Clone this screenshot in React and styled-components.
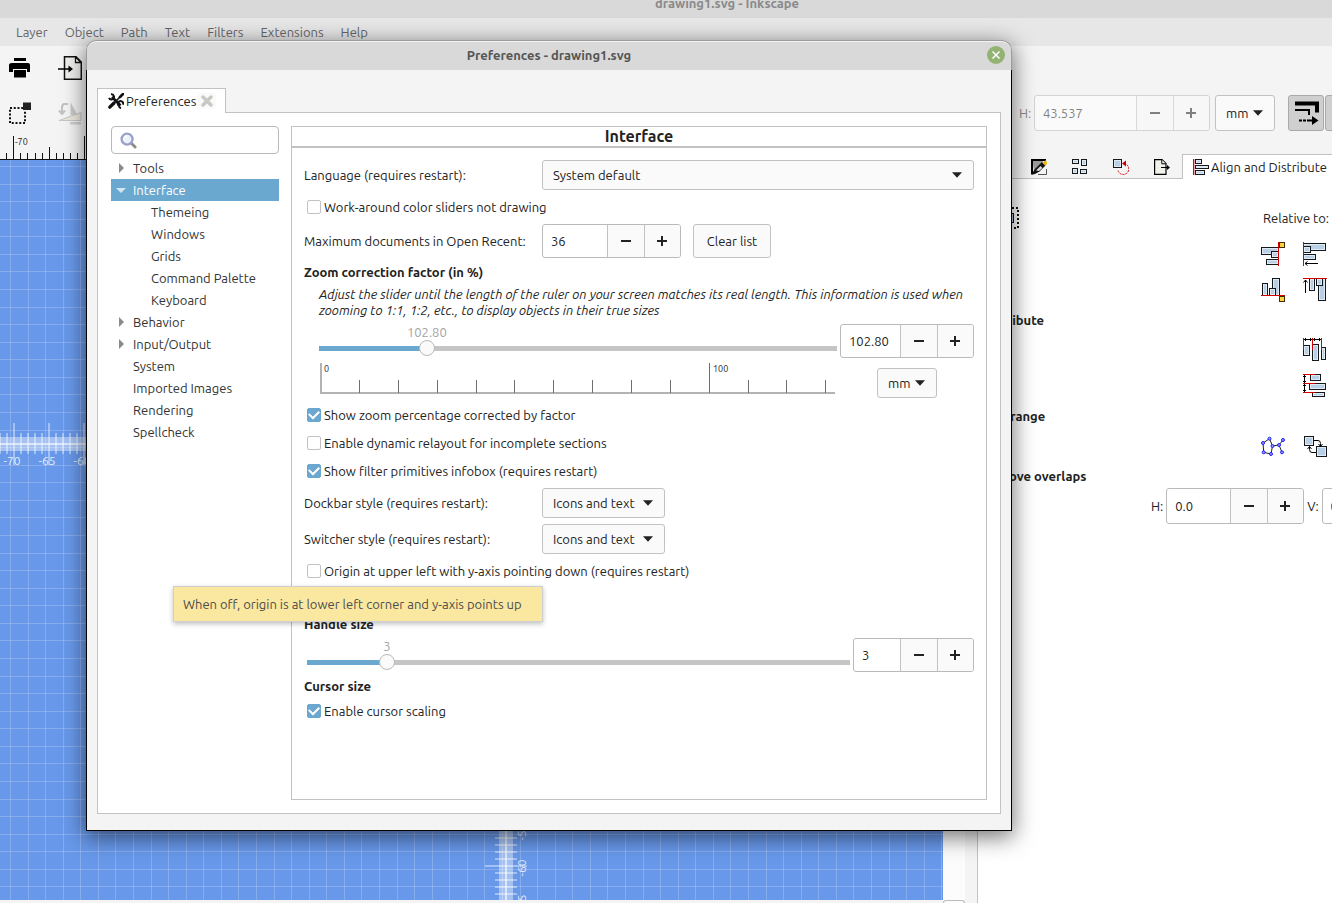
import { useState } from 'react';
import styled, { createGlobalStyle, css } from 'styled-components';

const GlobalStyle = createGlobalStyle`
  * {
    box-sizing: border-box;
  }

  body {
    margin: 0;
    overflow: hidden;
    background: #f4f4f4;
    color: #222222;
    font-family: Ubuntu, 'Noto Sans', 'Open Sans', sans-serif;
    font-size: 13px;
    line-height: 16px;
  }

  button,
  input,
  select {
    margin: 0;
    color: inherit;
    font: inherit;
  }

  svg {
    display: block;
    flex: none;
  }
`;

const Desktop = styled.div`
  position: relative;
  display: flex;
  flex-direction: column;
  height: 100vh;
  overflow: hidden;
  white-space: nowrap;
`;

const AppTitle = styled.header`
  display: flex;
  align-items: flex-end;
  justify-content: center;
  flex: none;
  height: 18px;
  padding: 0 0 7px 122px;
  background: #d9d9d9;
  color: #8a8a8a;
  font-weight: 600;
`;

const MenuBar = styled.nav`
  display: flex;
  align-items: center;
  flex: none;
  gap: 17px;
  height: 28px;
  padding-left: 16px;
  background: #e7e7e7;
  color: #66666a;
`;

const MenuItem = styled.button`
  padding: 0;
  border: none;
  background: none;
`;

const Toolbar = styled.div`
  display: flex;
  align-items: center;
  flex: none;
  height: 45px;
  padding: 0 0 2px 8px;
`;

const ToolButton = styled.button`
  padding: 0;
  margin-right: 26px;
  border: none;
  background: none;
`;

const SizeControls = styled.div`
  display: flex;
  align-items: center;
  flex: none;
  width: 313px;
  margin-left: auto;
`;

const ToggleButton = styled.button`
  flex: none;
  width: 36px;
  height: 36px;
  padding: 0 0 0 5px;
  margin-right: 1px;
  border: 1px solid #a9a9a9;
  border-radius: 3px;
  background: #cfcfcf;
`;

const Workspace = styled.main`
  display: flex;
  flex: 1;
  min-height: 0;
`;

const CanvasColumn = styled.div`
  display: flex;
  flex: 1;
  flex-direction: column;
  min-width: 0;
  padding-bottom: 3px;
`;

const RulerStrip = styled.svg`
  width: 100%;
  height: 24px;
`;

const Canvas = styled.svg`
  flex: 1;
  width: 100%;
  min-height: 0;
  background: #6898ea;
`;

const ScrollColumn = styled.div`
  display: flex;
  flex-direction: column;
  justify-content: flex-end;
  flex: none;
  width: 22px;
  margin-top: 24px;
  background: #fcfcfc;
`;

const CornerButton = styled.button`
  height: 3px;
  padding: 0;
  border: 1px solid #bcbcbc;
  border-bottom: none;
  border-radius: 3px 3px 0 0;
  background: #fcfcfc;
`;

const Dock = styled.aside`
  display: flex;
  flex-direction: column;
  flex: none;
  width: 355px;
  margin-left: 12px;
  padding-top: 18px;
  overflow: hidden;
`;

const DockTabs = styled.div`
  display: flex;
  flex: none;
  height: 25px;
  padding-left: 41px;
  box-shadow: inset 0 -1px 0 #c2c2c2;
`;

const DockTab = styled.button`
  display: flex;
  align-items: center;
  flex: none;
  justify-content: center;
  width: 41px;
  padding: 0;
  border: none;
  background: none;

  ${({ $active }) =>
    $active &&
    css`
      justify-content: flex-start;
      gap: 2px;
      width: 190px;
      padding-left: 10px;
      border: 1px solid #c2c2c2;
      border-bottom: none;
      background: #ffffff;
    `}
`;

const DockPage = styled.div`
  flex: 1;
  padding: 27px 0 0 4px;
  border-left: 1px solid #c2c2c2;
  background: #ffffff;
`;

const RelativeRow = styled.div`
  display: flex;
  align-items: center;
  height: 24px;
  margin-bottom: 6px;
  padding-left: 13px;
  gap: 244px;
`;

const DockHeading = styled.h2`
  height: 24px;
  margin: 0;
  padding-top: 4px;
  font-size: 13px;
  font-weight: 700;
`;

const DockRow = styled.div`
  display: flex;
  align-items: center;
  height: 36px;
  padding-left: ${({ $indent }) => $indent}px;
  gap: 18px;
`;

const PlainButton = styled.button`
  flex: none;
  padding: 0;
  border: none;
  background: none;
`;

const OverlapRow = styled(DockRow)`
  gap: 3px;
`;

const Dialog = styled.section`
  position: absolute;
  top: 40px;
  right: 320px;
  left: 86px;
  border-radius: 10px 10px 0 0;
  box-shadow: 0 5px 22px 1px rgba(0, 0, 0, 0.55);
`;

const DialogTitle = styled.header`
  display: flex;
  align-items: center;
  height: 30px;
  padding: 0 6px 2px 24px;
  border: 1px solid #9c9c9c;
  border-bottom: none;
  border-radius: 10px 10px 0 0;
  background: #d9d9d9;
  box-shadow: inset 0 1px 0 #f4f4f4;
`;

const DialogName = styled.h1`
  flex: 1;
  margin: 0;
  color: #555555;
  font-size: 13px;
  font-weight: 600;
  text-align: center;
`;

const CloseButton = styled.button`
  width: 18px;
  height: 18px;
  padding: 0;
  border: none;
  border-radius: 50%;
  background: #92b372;
`;

const DialogBody = styled.div`
  padding: 18px 10px 16px;
  border: 1px solid #000000;
  border-top: none;
  background: #f4f4f4;
`;

const NotebookTab = styled.div`
  position: relative;
  display: flex;
  align-items: center;
  width: 129px;
  height: 25px;
  margin-bottom: -1px;
  padding-left: 10px;
  gap: 2px;
  border: 1px solid #c2c2c2;
  border-bottom: none;
  background: #ffffff;
`;

const TabClose = styled.button`
  padding: 2px;
  border: none;
  border-radius: 3px;
  background: #fafafa;
`;

const NotebookPage = styled.div`
  display: flex;
  gap: 12px;
  padding: 13px;
  border: 1px solid #c2c2c2;
  background: #ffffff;
`;

const Sidebar = styled.div`
  flex: none;
  width: 168px;
`;

const SearchBox = styled.label`
  display: flex;
  align-items: center;
  height: 28px;
  margin-bottom: 3px;
  padding-left: 8px;
  gap: 6px;
  border: 1px solid #b9b9b9;
  border-radius: 4px;
`;

const SearchInput = styled.input`
  flex: 1;
  width: 100%;
  min-width: 0;
  border: none;
  outline: none;
  background: none;
`;

const TreeRow = styled.button`
  display: flex;
  align-items: center;
  width: 100%;
  height: 22px;
  padding: 0 0 0 ${({ $depth }) => 7 + $depth * 18}px;
  gap: 9px;
  border: none;
  background: ${({ $selected }) => ($selected ? '#6ba8cf' : 'none')};
  color: ${({ $selected }) => ($selected ? '#ffffff' : '#333333')};
`;

const Expander = styled.svg`
  width: 6px;
  height: 10px;
  overflow: visible;
  fill: ${({ $open }) => ($open ? '#d3e5f1' : '#8a8a8a')};
`;

const Panel = styled.div`
  flex: 1;
  min-width: 0;
  min-height: 674px;
  border: 1px solid #c2c2c2;
`;

const PanelTitle = styled.h2`
  height: 21px;
  margin: 0;
  border-bottom: 2px solid #c2c2c2;
  font-size: 16px;
  font-weight: 700;
  line-height: 18px;
  text-align: center;
`;

const Form = styled.form`
  display: flex;
  flex-direction: column;
  gap: 6px;
  padding: 12px;
`;

const Row = styled.div`
  display: flex;
  align-items: center;
  gap: ${({ $gap }) => $gap || 0}px;
  padding-left: ${({ $indent }) => $indent || 0}px;
`;

const RulerRow = styled(Row)`
  align-items: flex-end;
  justify-content: space-between;
  height: 34px;
  padding-right: 37px;
`;

const Label = styled.label`
  flex: none;
  width: 238px;
`;

const Heading = styled.h3`
  margin: 0;
  font-size: 13px;
  font-weight: 700;
`;

const HandleHeading = styled(Heading)`
  margin-top: 28px;
`;

const Hint = styled.p`
  margin: 0;
  padding-left: 15px;
  font-style: italic;
  white-space: normal;
`;

const CheckLabel = styled.label`
  display: flex;
  align-items: center;
  height: 22px;
  padding-left: 3px;
  gap: 3px;
`;

const CheckInput = styled.input`
  display: grid;
  place-items: center;
  width: 14px;
  height: 14px;
  border: 1px solid #c2c2c2;
  border-radius: 2px;
  background: #ffffff;
  appearance: none;

  &:checked {
    border-color: #6ba8cf;
    background: #6ba8cf;
  }

  &:checked::after {
    width: 8px;
    height: 5px;
    margin-bottom: 3px;
    border: solid #ffffff;
    border-width: 0 0 2px 2px;
    transform: rotate(-45deg);
    content: '';
  }
`;

const SelectWrap = styled.span`
  display: grid;
  grid-template-columns: 1fr 22px;
  align-items: center;
  flex: ${({ $width }) => ($width ? 'none' : 1)};
  width: ${({ $width }) => ($width ? `${$width}px` : 'auto')};

  svg {
    grid-area: 1 / 2;
    pointer-events: none;
  }
`;

const SelectBox = styled.select`
  grid-area: 1 / 1 / 2 / 3;
  width: 100%;
  height: ${({ $height }) => $height || 30}px;
  padding: 0 10px;
  border: 1px solid #c2c2c2;
  border-radius: 3px;
  background: #fafafa;
  appearance: none;
`;

const SpinBox = styled.div`
  display: flex;
  flex: none;
  height: ${({ $height }) => $height || 34}px;
  border: 1px solid #bababa;
  border-radius: 3px;
  background: #ffffff;
  overflow: hidden;
  opacity: ${({ $disabled }) => ($disabled ? 0.55 : 1)};
`;

const SpinInput = styled.input`
  width: ${({ $width }) => $width}px;
  padding: 0 0 0 8px;
  border: none;
  outline: none;
  background: none;
`;

const SpinButton = styled.button`
  display: grid;
  place-items: center;
  width: ${({ $last }) => ($last ? 36 : 37)}px;
  padding: 0 ${({ $last }) => ($last ? 2 : 0)}px 0 0;
  border: none;
  border-left: 1px solid #c2c2c2;
  background: #fafafa;
`;

const PushButton = styled.button`
  width: 78px;
  height: 34px;
  padding: 0;
  margin-left: 12px;
  border: 1px solid #c2c2c2;
  border-radius: 3px;
  background: #fafafa;
`;

const SliderBox = styled.div`
  display: flex;
  flex: 1;
  flex-direction: column;
  height: 34px;
  margin-right: ${({ $gap }) => $gap}px;
`;

const SliderValue = styled.output`
  width: 60px;
  margin-left: calc(var(--pos) - 30px);
  color: #a3a3a3;
  text-align: center;
`;

const Slider = styled.input`
  width: 100%;
  height: 16px;
  background: linear-gradient(
      to right,
      #6ba8cf var(--pos),
      #c5c5c5 var(--pos)
    )
    center / 100% 5px no-repeat;
  appearance: none;

  &::-webkit-slider-thumb {
    width: 16px;
    height: 16px;
    border: 1px solid #b9b9b9;
    border-radius: 50%;
    background: #fafafa;
    appearance: none;
  }
`;

const SizeLabel = styled.label`
  flex: none;
  width: 15px;
  color: #8c8c8c;
`;

const Tooltip = styled.div`
  position: absolute;
  top: 546px;
  left: 87px;
  width: 370px;
  padding: 9px;
  border: 1px solid #cfcfcf;
  background: #fbe8a0;
  box-shadow: 0 2px 5px rgba(0, 0, 0, 0.25);
  color: #4c4c4c;
`;

const menus = ['Layer', 'Object', 'Path', 'Text', 'Filters', 'Extensions', 'Help'];

const tree = [
  { name: 'Tools', depth: 0, state: 'closed' },
  { name: 'Interface', depth: 0, state: 'open' },
  { name: 'Themeing', depth: 1 },
  { name: 'Windows', depth: 1 },
  { name: 'Grids', depth: 1 },
  { name: 'Command Palette', depth: 1 },
  { name: 'Keyboard', depth: 1 },
  { name: 'Behavior', depth: 0, state: 'closed' },
  { name: 'Input/Output', depth: 0, state: 'closed' },
  { name: 'System', depth: 0 },
  { name: 'Imported Images', depth: 0 },
  { name: 'Rendering', depth: 0 },
  { name: 'Spellcheck', depth: 0 },
];

const range = (count) => Array.from({ length: count }, (_, i) => i);

const Arrow = () => (
  <svg width="10" height="6" viewBox="0 0 10 6">
    <path d="M0 .3h10L5 5.7z" fill="#222" />
  </svg>
);

const Dropdown = ({ id, label, options, width, height }) => (
  <SelectWrap $width={width}>
    <SelectBox id={id} aria-label={label} $height={height}>
      {options.map((option) => (
        <option key={option}>{option}</option>
      ))}
    </SelectBox>
    <Arrow />
  </SelectWrap>
);

const Spin = ({ id, label, value, width, height, disabled }) => {
  const [text, setText] = useState(value);
  const step = (delta) => {
    const decimals = (text.split('.')[1] || '').length;
    setText((Number(text) + delta).toFixed(decimals));
  };

  return (
    <SpinBox $disabled={disabled} $height={height}>
      <SpinInput
        id={id}
        aria-label={label}
        value={text}
        disabled={disabled}
        $width={width}
        onChange={(e) => setText(e.target.value)}
      />
      <SpinButton
        type="button"
        aria-label="Decrease"
        disabled={disabled}
        onClick={() => step(-1)}
      >
        <svg width="10" height="10">
          <path d="M0 5h10" stroke="#222" strokeWidth="2" />
        </svg>
      </SpinButton>
      <SpinButton
        type="button"
        aria-label="Increase"
        disabled={disabled}
        $last
        onClick={() => step(1)}
      >
        <svg width="10" height="10">
          <path d="M0 5h10M5 0v10" stroke="#222" strokeWidth="2" />
        </svg>
      </SpinButton>
    </SpinBox>
  );
};

const Check = ({ children, checked }) => (
  <CheckLabel>
    <CheckInput type="checkbox" defaultChecked={checked} />
    {children}
  </CheckLabel>
);

const ValueSlider = ({ label, min, max, initial, digits, gap }) => {
  const [value, setValue] = useState(initial);
  const ratio = (value - min) / (max - min);

  return (
    <SliderBox
      $gap={gap}
      style={{ '--pos': `calc(8px + (100% - 16px) * ${ratio})` }}
    >
      <SliderValue>{value.toFixed(digits)}</SliderValue>
      <Slider
        type="range"
        aria-label={label}
        min={min}
        max={max}
        step="any"
        value={value}
        onChange={(e) => setValue(Number(e.target.value))}
      />
    </SliderBox>
  );
};

const Bars = ({ boxes }) =>
  boxes.map(([x, y, w, h]) => (
    <g key={`${x}-${y}`}>
      <rect x={x} y={y} width={w} height={h} fill="#b8cfe6" stroke="#16191c" />
      <rect
        x={x + 1}
        y={y + 1}
        width={w - 2}
        height={h - 2}
        fill="none"
        stroke="#dfeaf5"
      />
    </g>
  ));

const AlignIcon = ({ boxes, red, black, yellow }) => (
  <svg width="24" height="24" viewBox="0 0 24 24">
    <Bars boxes={boxes} />
    {black && <path d={black} stroke="#000" fill="none" />}
    {red && <path d={red} stroke="#d40000" fill="none" />}
    {yellow && (
      <rect
        x={yellow[0]}
        y={yellow[1]}
        width="5"
        height="5"
        fill="#ffd23e"
        stroke="#3b3000"
      />
    )}
  </svg>
);

const alignRows = [
  [
    {
      label: 'Align right edges to anchor',
      boxes: [[0.5, 5.5, 17, 7], [10.5, 9.5, 7, 6], [5.5, 17.5, 12, 5]],
      red: 'M17.5 0v24',
      yellow: [18.5, 0.5],
    },
    {
      label: 'Align left edges',
      boxes: [[0.5, 1.5, 22, 7], [0.5, 4.5, 7, 6], [0.5, 12.5, 12, 5]],
      black: 'M15 21.5H2M4.5 19.5l-2.5 2 2.5 2',
      red: 'M.5 0v24',
    },
  ],
  [
    {
      label: 'Align bottom edges to anchor',
      boxes: [[1.5, 5.5, 5, 12], [11.5, 0.5, 7, 17], [8.5, 10.5, 6, 7]],
      red: 'M0 17.5h24',
      yellow: [18.5, 18.5],
    },
    {
      label: 'Align top edges',
      boxes: [[6.5, 0.5, 5, 12], [15.5, 0.5, 7, 22], [13.5, 0.5, 6, 7]],
      black: 'M2.5 15V2M.5 4.5l2-2.5 2 2.5',
      red: 'M0 .5h24',
    },
  ],
];

const distributeRows = [
  {
    label: 'Distribute horizontally',
    boxes: [[0.5, 7.5, 6, 10], [9.5, 6.5, 6, 16], [18.5, 9.5, 4, 12]],
    black: 'M1 1.5h17M2.5 0v3M7.5 0v3M11.5 0v3M16.5 0v3',
    red: 'M.5 0v12M9.5 0v12M18.5 0v12',
  },
  {
    label: 'Distribute vertically',
    boxes: [[7.5, 0.5, 10, 6], [6.5, 9.5, 16, 6], [9.5, 18.5, 12, 4]],
    black: 'M1.5 1v17M0 2.5h3M0 7.5h3M0 11.5h3M0 16.5h3',
    red: 'M0 .5h12M0 9.5h12M0 18.5h12',
  },
];

const nodes = [
  [2, 9], [8.5, 4.7], [11.5, 12], [10, 20], [2.7, 18.3], [18, 11], [22, 6], [21, 18.3],
];

const GraphIcon = () => (
  <svg width="24" height="24" viewBox="0 0 24 24">
    <path
      d="M11.5 12L8.5 4.7 2 9l.7 9.3L10 20l1.5-8 6.5-1 4-5M18 11l3 7.3"
      stroke="#222"
      fill="none"
    />
    {nodes.map(([x, y]) => (
      <circle key={x} cx={x} cy={y} r="1.5" fill="#9a9aff" stroke="#1f1fff" />
    ))}
  </svg>
);

const ExchangeIcon = () => (
  <svg width="24" height="24" viewBox="0 0 24 24">
    <Bars boxes={[[1.5, 2.5, 9, 9], [13.5, 12.5, 10, 10]]} />
    <path
      d="M11 6.5h4q2.5 0 2.5 3v3M15.5 10l2 2.5 2-2.5M13 18.5H9q-2.5 0-2.5-3v-3M4.5 15l2-2.5 2 2.5"
      stroke="#000"
      fill="none"
    />
  </svg>
);

const PrintIcon = () => (
  <svg width="24" height="24" viewBox="0 0 24 24">
    <path d="M6 2h12v3H6zM4 7h16q2 0 2 2v7h-3v-3H5v3H1V9q0-2 3-2z" />
    <path d="M6 14h12v7.5H6z" />
  </svg>
);

const ImportIcon = () => (
  <svg width="24" height="24" viewBox="0 0 24 24">
    <path d="M6.5.7H18l5.3 5.3v17.3H6.5z" fill="#efefed" stroke="#111" strokeWidth="1.5" />
    <path d="M17.5 1v5.5H23z" fill="#fff" stroke="#111" strokeWidth="1.3" />
    <path d="M0 13h12" stroke="#000" strokeWidth="1.5" />
    <path d="M10.5 9.5L15 13l-4.5 3.5z" />
  </svg>
);

const SelectIcon = () => (
  <svg width="24" height="24" viewBox="0 0 24 24">
    <rect
      x="2"
      y="7"
      width="15"
      height="15"
      fill="none"
      stroke="#111"
      strokeWidth="2"
      strokeDasharray="2 1.75"
    />
    <path d="M15 1.5h8V9h-8z" fill="#222" />
  </svg>
);

const RotateIcon = () => (
  <svg width="24" height="24" viewBox="0 0 24 24">
    <path d="M12.5 1v13h7z" fill="#c9c9c9" />
    <path d="M1 19.5l22-8v8z" fill="#ece8dc" stroke="#c6c6c6" />
    <path d="M12 21h11v2.5H12z" fill="#cfcfcf" />
    <path d="M10 3H6.5Q4 3 4 6.5V12M1 9.5L4 13l3-3.5" stroke="#c2c2c2" strokeWidth="2" fill="none" />
  </svg>
);

const ScaleStrokeIcon = () => (
  <svg width="26" height="26" viewBox="0 0 26 26">
    <path d="M1 3.5h22v9" stroke="#000" strokeWidth="4" fill="none" />
    <path d="M1 10h14v5" stroke="#000" strokeWidth="2" fill="none" />
    <path d="M5 20.5h10" stroke="#000" strokeWidth="2" strokeDasharray="3 1" />
    <path d="M15 20.5h4" stroke="#000" strokeWidth="2" />
    <path d="M18 16l6.5 4.5L18 25z" />
  </svg>
);

const FillIcon = () => (
  <svg width="16" height="16" viewBox="0 0 16 16">
    <path d="M1.5 1.5H13L3 13z" fill="#9a9a9a" />
    <path d="M1 15V1h14" stroke="#000" strokeWidth="2" fill="none" />
    <path d="M0 16l4-6 7-7 3.5 3.5-6 6L4 15z" fill="#111" />
    <path d="M5 11.5l4.5-4.500 2 2L8 12z" fill="#d8d8d8" />
    <path d="M11.500 4L15 1l1 3.500L14.500 7z" fill="#f0b400" />
    <path d="M7 15.500h8.500V10" stroke="#555" fill="none" />
  </svg>
);

const ObjectsIcon = () => (
  <svg width="16" height="16" viewBox="0 0 16 16">
    <Bars boxes={[[0.5, 0.5, 6, 4], [9.5, 0.5, 5, 6], [0.5, 9.5, 5, 5], [8.5, 10.5, 6, 4]]} />
  </svg>
);

const TransformIcon = () => (
  <svg width="16" height="16" viewBox="0 0 16 16">
    <Bars boxes={[[0.5, 0.5, 8, 8]]} />
    <path d="M11 4.5a5.500 5.500 0 1 1-6 7" stroke="#d40000" strokeDasharray="2 1" fill="none" />
    <path d="M13 1.500v6L9 4.500z" fill="#d40000" />
  </svg>
);

const ExportIcon = () => (
  <svg width="16" height="16" viewBox="0 0 16 16">
    <path d="M.6.6H8l4 4v10.800H.6z" fill="#f2f2ea" stroke="#000" strokeWidth="1.200" />
    <path d="M7.800.8v4h4" fill="#fff" stroke="#000" />
    <path d="M7 8.500h7" stroke="#000" />
    <path d="M13 6l3 2.500-3 2.500z" />
  </svg>
);

const AlignTabIcon = () => (
  <svg width="16" height="16" viewBox="0 0 16 16">
    <Bars boxes={[[2.5, 0.5, 6, 4], [2.5, 6.5, 13, 3], [2.5, 11.5, 9, 4]]} />
    <path d="M.7 0v16" stroke="#d40000" strokeWidth="1.300" />
  </svg>
);

const ToolsIcon = () => (
  <svg width="16" height="16" viewBox="0 0 16 16" stroke="#111" fill="none">
    <path d="M5 11l8-8" strokeWidth="1.600" />
    <path d="M12 4l3-3" strokeWidth="2.600" strokeLinecap="round" />
    <path d="M1.800 14.200L6 10" strokeWidth="3.200" strokeLinecap="round" />
    <path d="M4 4l8.500 8.500" strokeWidth="2.600" />
    <path d="M3 1.200a2.600 2.600 0 1 1-2 3.600M11 12.800a2.600 2.600 0 1 1 4-1.200M13 15.200a2.600 2.600 0 0 1-2-2.400" strokeWidth="2" />
  </svg>
);

const SearchIcon = () => (
  <svg width="17" height="17" viewBox="0 0 18 18">
    <path d="M12 12l4 4" stroke="#8d8d80" strokeWidth="3" strokeLinecap="round" />
    <circle cx="7.5" cy="7.5" r="5.800" fill="#eef1fa" stroke="#9aa2cc" strokeWidth="2.500" />
    <path d="M4.500 8a3.500 3.500 0 0 1 3-4" stroke="#fff" strokeWidth="1.500" fill="none" />
  </svg>
);

const DashedIcon = () => (
  <svg width="24" height="24" viewBox="0 0 24 24">
    <rect x="1" y="2" width="22" height="20" fill="none" stroke="#111" strokeWidth="2" strokeDasharray="2 2" />
    <rect x="6.500" y="7.500" width="12" height="9" fill="#b8cfe6" stroke="#111" />
  </svg>
);

const TopRuler = () => (
  <RulerStrip>
    {range(136).map((i) => {
      const x = Math.round(6.4 + i * 7.03) + 0.5;
      const top = i % 10 === 1 ? 0 : i % 5 === 1 ? 11 : 17;
      return <path key={i} d={`M${x} ${top}V24`} stroke="#111" />;
    })}
    <path d="M0 23.5h2000" stroke="#111" />
    <text x="15" y="9" fontSize="9" fill="#222">
      -70
    </text>
  </RulerStrip>
);

const Drawing = () => (
  <Canvas>
    <g fill="#ffffff" fillOpacity="0.2">
      {range(110).map((i) => (
        <rect
          key={i}
          x={Math.round(10 + i * 17.57)}
          width="1"
          height="100%"
        />
      ))}
      {range(90).map((i) => (
        <rect
          key={i}
          y={Math.round(6 + i * 17.57)}
          width="100%"
          height="1"
        />
      ))}
    </g>
    <g fill="#ffffff" fillOpacity="0.4">
      <rect x="0" y="277" width="100%" height="14" />
      <rect x="499" y="0" width="14" height="100%" />
      <rect x="0" y="283" width="100%" height="2" fillOpacity="0.6" />
      <rect x="505" y="0" width="2" height="100%" fillOpacity="0.6" />
      {range(40).map((i) => {
        const big = i % 5 === 2;
        const x = Math.round(-1 + i * 7.03);
        return (
          <rect
            key={i}
            x={x}
            y={big ? 263 : 273}
            width="2"
            height={big ? 42 : 21}
          />
        );
      })}
      {range(14).map((i) => {
        const big = i % 5 === 4;
        const y = Math.round(677 + i * 7.03);
        return (
          <rect
            key={i}
            x={big ? 485 : 495}
            y={y}
            width={big ? 42 : 22}
            height="2"
          />
        );
      })}
    </g>
    <g fill="#e4edfb" fontSize="12" textAnchor="middle">
      <text x="12" y="305">-70</text>
      <text x="47" y="305">-65</text>
      <text x="82" y="305">-60</text>
      <text transform="translate(526 672) rotate(-90)">-55</text>
      <text transform="translate(526 708) rotate(-90)">-60</text>
      <text transform="translate(526 743) rotate(-90)">-65</text>
    </g>
  </Canvas>
);

const ZoomRuler = () => (
  <svg width="518" height="36" fill="none">
    <path d="M1 31h515" stroke="#b3b3b3" strokeWidth="2" />
    <path d="M2 1v30" stroke="#b3b3b3" strokeWidth="2" />
    {range(13).map((i) => {
      const x = Math.round(40 + i * 38.85) + 0.5;
      return (
        <path key={i} d={`M${x} ${i === 9 ? 1 : 18}V31`} stroke="#6e6e6e" />
      );
    })}
    <g fill="#222" fontSize="9">
      <text x="5" y="10">0</text>
      <text x="394" y="10">100</text>
    </g>
  </svg>
);

const DockPanel = () => (
  <Dock>
    <DockTabs>
      <DockTab aria-label="Fill and Stroke"><FillIcon /></DockTab>
      <DockTab aria-label="Objects"><ObjectsIcon /></DockTab>
      <DockTab aria-label="Transform"><TransformIcon /></DockTab>
      <DockTab aria-label="Export"><ExportIcon /></DockTab>
      <DockTab $active>
        <AlignTabIcon />
        Align and Distribute
      </DockTab>
    </DockTabs>
    <DockPage>
      <RelativeRow>
        <DashedIcon />
        <span>Relative to:</span>
      </RelativeRow>
      {alignRows.map((row) => (
        <DockRow key={row[0].label} $indent={279}>
          {row.map(({ label, ...icon }) => (
            <PlainButton key={label} aria-label={label}>
              <AlignIcon {...icon} />
            </PlainButton>
          ))}
        </DockRow>
      ))}
      <DockHeading>Distribute</DockHeading>
      {distributeRows.map(({ label, ...icon }) => (
        <DockRow key={label} $indent={321}>
          <PlainButton aria-label={label}>
            <AlignIcon {...icon} />
          </PlainButton>
        </DockRow>
      ))}
      <DockHeading>Rearrange</DockHeading>
      <DockRow $indent={279}>
        <PlainButton aria-label="Graph layout"><GraphIcon /></PlainButton>
        <PlainButton aria-label="Exchange positions"><ExchangeIcon /></PlainButton>
      </DockRow>
      <DockHeading>Remove overlaps</DockHeading>
      <OverlapRow $indent={169}>
        <label htmlFor="overlap-h">H:</label>
        <Spin id="overlap-h" value="0.0" width={63} height={36} />
        <label htmlFor="overlap-v">V:</label>
        <Spin id="overlap-v" value="0.0" width={63} height={36} />
      </OverlapRow>
    </DockPage>
  </Dock>
);

const Preferences = () => {
  const [selected, setSelected] = useState('Interface');

  return (
    <Dialog role="dialog" aria-label="Preferences">
      <DialogTitle>
        <DialogName>Preferences - drawing1.svg</DialogName>
        <CloseButton aria-label="Close window">
          <svg width="18" height="18">
            <path d="M5.5 5.5l7 7M12.5 5.5l-7 7" stroke="#fff" strokeWidth="1.500" />
          </svg>
        </CloseButton>
      </DialogTitle>
      <DialogBody>
        <NotebookTab>
          <ToolsIcon />
          Preferences
          <TabClose aria-label="Close tab">
            <svg width="14" height="12">
              <path
                d="M3 2l8 8M11 2l-8 8"
                stroke="#c8c8c4"
                strokeWidth="3.500"
                strokeLinecap="round"
              />
            </svg>
          </TabClose>
        </NotebookTab>
        <NotebookPage>
          <Sidebar>
            <SearchBox>
              <SearchIcon />
              <SearchInput type="text" aria-label="Search" />
            </SearchBox>
            {tree.map(({ name, depth, state }) => (
              <TreeRow
                key={name}
                $depth={depth}
                $selected={name === selected}
                onClick={() => setSelected(name)}
              >
                <Expander $open={state === 'open'}>
                  {state === 'closed' && <path d="M1 0v10l5-5z" />}
                  {state === 'open' && <path d="M-2 3h10L3 8z" />}
                </Expander>
                {name}
              </TreeRow>
            ))}
          </Sidebar>
          <Panel>
            <PanelTitle>Interface</PanelTitle>
            <Form>
              <Row>
                <Label htmlFor="language">Language (requires restart):</Label>
                <Dropdown id="language" options={['System default']} />
              </Row>
              <Check>Work-around color sliders not drawing</Check>
              <Row>
                <Label htmlFor="recent">Maximum documents in Open Recent:</Label>
                <Spin id="recent" value="36" width={64} />
                <PushButton type="button">Clear list</PushButton>
              </Row>
              <Heading>Zoom correction factor (in %)</Heading>
              <Hint>
                Adjust the slider until the length of the ruler on your screen
                matches its real length. This information is used when zooming to
                1:1, 1:2, etc., to display objects in their true sizes
              </Hint>
              <Row $indent={15}>
                <ValueSlider
                  label="Zoom correction"
                  min={30}
                  max={396}
                  initial={102.8}
                  digits={2}
                  gap={3}
                />
                <Spin label="Zoom correction factor" value="102.80" width={59} />
              </Row>
              <RulerRow $indent={15}>
                <ZoomRuler />
                <Dropdown label="Ruler unit" options={['mm']} width={60} />
              </RulerRow>
              <Check checked>Show zoom percentage corrected by factor</Check>
              <Check>Enable dynamic relayout for incomplete sections</Check>
              <Check checked>Show filter primitives infobox (requires restart)</Check>
              <Row>
                <Label htmlFor="dockbar">Dockbar style (requires restart):</Label>
                <Dropdown id="dockbar" options={['Icons and text']} width={123} />
              </Row>
              <Row>
                <Label htmlFor="switcher">Switcher style (requires restart):</Label>
                <Dropdown id="switcher" options={['Icons and text']} width={123} />
              </Row>
              <Check>Origin at upper left with y-axis pointing down (requires restart)</Check>
              <HandleHeading>Handle size</HandleHeading>
              <Row $indent={3}>
                <ValueSlider
                  label="Handle size slider"
                  min={0}
                  max={22}
                  initial={3}
                  digits={0}
                  gap={3}
                />
                <Spin label="Handle size" value="3" width={46} />
              </Row>
              <Heading>Cursor size</Heading>
              <Check checked>Enable cursor scaling</Check>
            </Form>
          </Panel>
        </NotebookPage>
      </DialogBody>
      <Tooltip role="tooltip">
        When off, origin is at lower left corner and y-axis points up
      </Tooltip>
    </Dialog>
  );
};

const App = () => (
  <Desktop>
    <GlobalStyle />
    <AppTitle>drawing1.svg - Inkscape</AppTitle>
    <MenuBar>
      {menus.map((menu) => (
        <MenuItem key={menu}>{menu}</MenuItem>
      ))}
    </MenuBar>
    <Toolbar>
      <ToolButton aria-label="Print"><PrintIcon /></ToolButton>
      <ToolButton aria-label="Import"><ImportIcon /></ToolButton>
    </Toolbar>
    <Toolbar>
      <ToolButton aria-label="Select all"><SelectIcon /></ToolButton>
      <ToolButton aria-label="Rotate"><RotateIcon /></ToolButton>
      <SizeControls>
        <SizeLabel htmlFor="height">H:</SizeLabel>
        <Spin id="height" value="43.537" width={101} height={36} disabled />
        <Row $indent={5} $gap={13}>
          <Dropdown label="Unit" options={['mm']} width={60} height={36} />
          <ToggleButton aria-label="Scale stroke width"><ScaleStrokeIcon /></ToggleButton>
        </Row>
        <ToggleButton aria-label="Scale rounded corners"><ScaleStrokeIcon /></ToggleButton>
      </SizeControls>
    </Toolbar>
    <Workspace>
      <CanvasColumn>
        <TopRuler />
        <Drawing />
      </CanvasColumn>
      <ScrollColumn>
        <CornerButton aria-label="Color management" />
      </ScrollColumn>
      <DockPanel />
    </Workspace>
    <Preferences />
  </Desktop>
);

export default App;
